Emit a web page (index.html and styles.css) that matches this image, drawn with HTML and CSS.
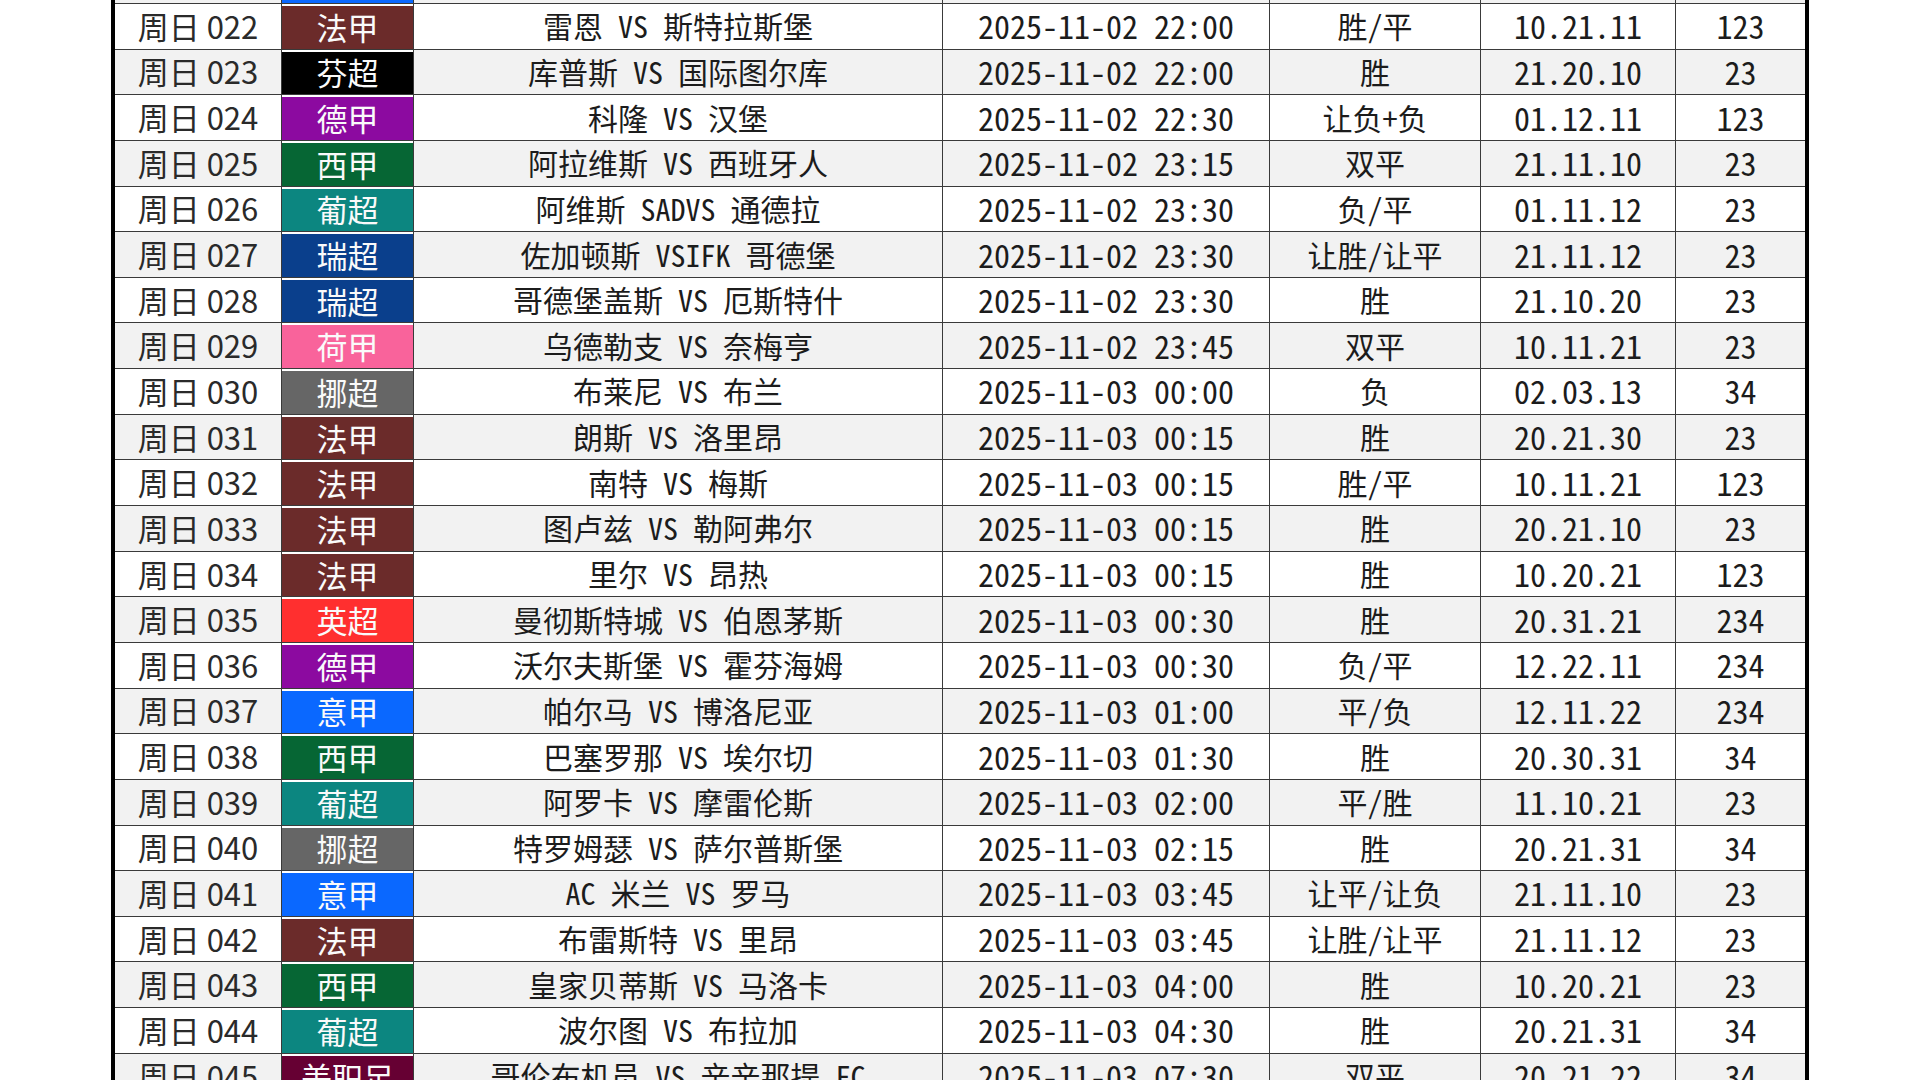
FILE: index.html
```html
<!DOCTYPE html>
<html lang="zh-CN">
<head>
<meta charset="utf-8">
<title>竞彩足球 周日赛程</title>
<link rel="stylesheet" href="styles.css">
</head>
<body>
<div class="viewport">
  <div class="sheet">
    <div class="row alt"><div class="c no"></div><div class="c lg"><span class="tag yijia"></span></div><div class="c match"></div><div class="c time"></div><div class="c pick"></div><div class="c score"></div><div class="c num"></div></div>
    <div class="row"><div class="c no">周日 022</div><div class="c lg"><span class="tag fajia">法甲</span></div><div class="c match">雷恩 VS 斯特拉斯堡</div><div class="c time">2025-11-02 22:00</div><div class="c pick">胜/平</div><div class="c score">10.21.11</div><div class="c num">123</div></div>
    <div class="row alt"><div class="c no">周日 023</div><div class="c lg"><span class="tag fenchao">芬超</span></div><div class="c match">库普斯 VS 国际图尔库</div><div class="c time">2025-11-02 22:00</div><div class="c pick">胜</div><div class="c score">21.20.10</div><div class="c num">23</div></div>
    <div class="row"><div class="c no">周日 024</div><div class="c lg"><span class="tag dejia">德甲</span></div><div class="c match">科隆 VS 汉堡</div><div class="c time">2025-11-02 22:30</div><div class="c pick">让负+负</div><div class="c score">01.12.11</div><div class="c num">123</div></div>
    <div class="row alt"><div class="c no">周日 025</div><div class="c lg"><span class="tag xijia">西甲</span></div><div class="c match">阿拉维斯 VS 西班牙人</div><div class="c time">2025-11-02 23:15</div><div class="c pick">双平</div><div class="c score">21.11.10</div><div class="c num">23</div></div>
    <div class="row"><div class="c no">周日 026</div><div class="c lg"><span class="tag puchao">葡超</span></div><div class="c match">阿维斯 SADVS 通德拉</div><div class="c time">2025-11-02 23:30</div><div class="c pick">负/平</div><div class="c score">01.11.12</div><div class="c num">23</div></div>
    <div class="row alt"><div class="c no">周日 027</div><div class="c lg"><span class="tag ruichao">瑞超</span></div><div class="c match">佐加顿斯 VSIFK 哥德堡</div><div class="c time">2025-11-02 23:30</div><div class="c pick">让胜/让平</div><div class="c score">21.11.12</div><div class="c num">23</div></div>
    <div class="row"><div class="c no">周日 028</div><div class="c lg"><span class="tag ruichao">瑞超</span></div><div class="c match">哥德堡盖斯 VS 厄斯特什</div><div class="c time">2025-11-02 23:30</div><div class="c pick">胜</div><div class="c score">21.10.20</div><div class="c num">23</div></div>
    <div class="row alt"><div class="c no">周日 029</div><div class="c lg"><span class="tag hejia">荷甲</span></div><div class="c match">乌德勒支 VS 奈梅亨</div><div class="c time">2025-11-02 23:45</div><div class="c pick">双平</div><div class="c score">10.11.21</div><div class="c num">23</div></div>
    <div class="row"><div class="c no">周日 030</div><div class="c lg"><span class="tag nuochao">挪超</span></div><div class="c match">布莱尼 VS 布兰</div><div class="c time">2025-11-03 00:00</div><div class="c pick">负</div><div class="c score">02.03.13</div><div class="c num">34</div></div>
    <div class="row alt"><div class="c no">周日 031</div><div class="c lg"><span class="tag fajia">法甲</span></div><div class="c match">朗斯 VS 洛里昂</div><div class="c time">2025-11-03 00:15</div><div class="c pick">胜</div><div class="c score">20.21.30</div><div class="c num">23</div></div>
    <div class="row"><div class="c no">周日 032</div><div class="c lg"><span class="tag fajia">法甲</span></div><div class="c match">南特 VS 梅斯</div><div class="c time">2025-11-03 00:15</div><div class="c pick">胜/平</div><div class="c score">10.11.21</div><div class="c num">123</div></div>
    <div class="row alt"><div class="c no">周日 033</div><div class="c lg"><span class="tag fajia">法甲</span></div><div class="c match">图卢兹 VS 勒阿弗尔</div><div class="c time">2025-11-03 00:15</div><div class="c pick">胜</div><div class="c score">20.21.10</div><div class="c num">23</div></div>
    <div class="row"><div class="c no">周日 034</div><div class="c lg"><span class="tag fajia">法甲</span></div><div class="c match">里尔 VS 昂热</div><div class="c time">2025-11-03 00:15</div><div class="c pick">胜</div><div class="c score">10.20.21</div><div class="c num">123</div></div>
    <div class="row alt"><div class="c no">周日 035</div><div class="c lg"><span class="tag yingchao">英超</span></div><div class="c match">曼彻斯特城 VS 伯恩茅斯</div><div class="c time">2025-11-03 00:30</div><div class="c pick">胜</div><div class="c score">20.31.21</div><div class="c num">234</div></div>
    <div class="row"><div class="c no">周日 036</div><div class="c lg"><span class="tag dejia">德甲</span></div><div class="c match">沃尔夫斯堡 VS 霍芬海姆</div><div class="c time">2025-11-03 00:30</div><div class="c pick">负/平</div><div class="c score">12.22.11</div><div class="c num">234</div></div>
    <div class="row alt"><div class="c no">周日 037</div><div class="c lg"><span class="tag yijia">意甲</span></div><div class="c match">帕尔马 VS 博洛尼亚</div><div class="c time">2025-11-03 01:00</div><div class="c pick">平/负</div><div class="c score">12.11.22</div><div class="c num">234</div></div>
    <div class="row"><div class="c no">周日 038</div><div class="c lg"><span class="tag xijia">西甲</span></div><div class="c match">巴塞罗那 VS 埃尔切</div><div class="c time">2025-11-03 01:30</div><div class="c pick">胜</div><div class="c score">20.30.31</div><div class="c num">34</div></div>
    <div class="row alt"><div class="c no">周日 039</div><div class="c lg"><span class="tag puchao">葡超</span></div><div class="c match">阿罗卡 VS 摩雷伦斯</div><div class="c time">2025-11-03 02:00</div><div class="c pick">平/胜</div><div class="c score">11.10.21</div><div class="c num">23</div></div>
    <div class="row"><div class="c no">周日 040</div><div class="c lg"><span class="tag nuochao">挪超</span></div><div class="c match">特罗姆瑟 VS 萨尔普斯堡</div><div class="c time">2025-11-03 02:15</div><div class="c pick">胜</div><div class="c score">20.21.31</div><div class="c num">34</div></div>
    <div class="row alt"><div class="c no">周日 041</div><div class="c lg"><span class="tag yijia">意甲</span></div><div class="c match">AC 米兰 VS 罗马</div><div class="c time">2025-11-03 03:45</div><div class="c pick">让平/让负</div><div class="c score">21.11.10</div><div class="c num">23</div></div>
    <div class="row"><div class="c no">周日 042</div><div class="c lg"><span class="tag fajia">法甲</span></div><div class="c match">布雷斯特 VS 里昂</div><div class="c time">2025-11-03 03:45</div><div class="c pick">让胜/让平</div><div class="c score">21.11.12</div><div class="c num">23</div></div>
    <div class="row alt"><div class="c no">周日 043</div><div class="c lg"><span class="tag xijia">西甲</span></div><div class="c match">皇家贝蒂斯 VS 马洛卡</div><div class="c time">2025-11-03 04:00</div><div class="c pick">胜</div><div class="c score">10.20.21</div><div class="c num">23</div></div>
    <div class="row"><div class="c no">周日 044</div><div class="c lg"><span class="tag puchao">葡超</span></div><div class="c match">波尔图 VS 布拉加</div><div class="c time">2025-11-03 04:30</div><div class="c pick">胜</div><div class="c score">20.21.31</div><div class="c num">34</div></div>
    <div class="row alt"><div class="c no">周日 045</div><div class="c lg"><span class="tag meizhizu">美职足</span></div><div class="c match">哥伦布机员 VS 辛辛那提 FC</div><div class="c time">2025-11-03 07:30</div><div class="c pick">双平</div><div class="c score">20.21.22</div><div class="c num">34</div></div>
  </div>
</div>
</body>
</html>
```
FILE: styles.css
```css
html, body {
  margin: 0;
  padding: 0;
  background: #ffffff;
  overflow: hidden;
}

.viewport {
  width: 1920px;
  height: 1080px;
  overflow: hidden;
}

.sheet {
  width: 1698px;
  margin-left: 111px;
  margin-top: -41.65px;
  border-left: 4px solid #000;
  border-right: 4px solid #000;
  box-sizing: border-box;
  font-family: "Noto Sans Mono CJK SC", "Noto Sans CJK SC", sans-serif;
  color: #1c1c1c;
}

.row {
  display: grid;
  grid-template-columns: 167px 132px 529px 327px 211px 195px 129px;
  height: 45.65px;
  box-sizing: border-box;
  border-bottom: 1px solid #3a3a3a;
  background: #ffffff;
}

.row.alt {
  background: #f2f2f2;
}

.c {
  display: flex;
  align-items: center;
  justify-content: center;
  min-height: 0;
  padding-bottom: 2px;
  box-sizing: border-box;
  border-right: 1px solid #3a3a3a;
  font-size: 30px;
  line-height: 1;
  white-space: nowrap;
}

.c.num {
  border-right: none;
}

.no {
  font-family: "Noto Sans CJK SC", sans-serif;
  font-size: 31px;
  color: #2a2a2a;
}

.lg {
  align-items: stretch;
  padding-top: 2px;
  padding-bottom: 0;
  background: #ffffff;
}

.tag {
  flex: 1;
  display: flex;
  align-items: center;
  justify-content: center;
  padding-bottom: 2px;
  font-family: "Noto Sans CJK SC", sans-serif;
  font-size: 31px;
  color: #fafafa;
}

.match, .pick {
  font-size: 30px;
  font-weight: 500;
}

.time, .score, .num {
  font-size: 32px;
}

.score, .num {
  font-weight: 500;
}

.fajia { background: #6b2b2a; }
.fenchao { background: #000000; }
.dejia { background: #8c0aa0; }
.xijia { background: #066634; }
.puchao { background: #0c8680; }
.ruichao { background: #0a3f8c; }
.hejia { background: #f9639b; }
.nuochao { background: #666666; }
.yingchao { background: #ff2f2f; }
.yijia { background: #0a68ff; }
.meizhizu { background: #660033; }
```
